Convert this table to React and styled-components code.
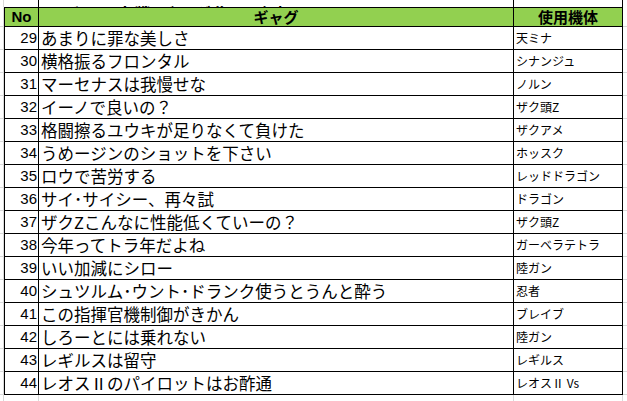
import React from "react";
import styled, { createGlobalStyle } from "styled-components";

const GlobalStyle = createGlobalStyle`
  html, body {
    margin: 0;
    padding: 0;
    background: #ffffff;
  }
  body {
    font-family: "Noto Sans CJK JP", "Liberation Sans", sans-serif;
    color: #000;
    overflow: hidden;
  }
`;

const rows = [
  [29, "あまりに罪な美しさ", "天ミナ"],
  [30, "横格振るフロンタル", "シナンジュ"],
  [31, "マーセナスは我慢せな", "ノルン"],
  [32, "イーノで良いの？", "ザク頭Z"],
  [33, "格闘擦るユウキが足りなくて負けた", "ザクアメ"],
  [34, "うめージンのショットを下さい", "ホッスク"],
  [35, "ロウで苦労する", "レッドドラゴン"],
  [36, "サイ･サイシー、再々試", "ドラゴン"],
  [37, "ザクZこんなに性能低くていーの？", "ザク頭Z"],
  [38, "今年ってトラ年だよね", "ガーベラテトラ"],
  [39, "いい加減にシロー", "陸ガン"],
  [40, "シュツルム･ウント･ドランク使うとうんと酔う", "忍者"],
  [41, "この指揮官機制御がきかん", "ブレイブ"],
  [42, "しろーとには乗れない", "陸ガン"],
  [43, "レギルスは留守", "レギルス"],
  [44, "レオスⅡのパイロットはお酢通", "レオスⅡ Vs"],
];

const Sheet = styled.div`
  width: 627px;
  height: 401px;
  display: flex;
  flex-direction: column;
  overflow: hidden;
`;

const Row = styled.div`
  display: grid;
  grid-template-columns: 4px 35px 475px 109px 1fr;
  height: ${(p) => p.h}px;
  flex: none;
`;

const Stub = styled.div`
  border-bottom: 1px solid ${(p) => (p.plain ? "transparent" : "#d9d9d9")};
  border-right: ${(p) => (p.edge ? "1px solid #d9d9d9" : "none")};
  box-sizing: border-box;
`;

const Cell = styled.div`
  box-sizing: border-box;
  border-right: 1px solid ${(p) => p.line || "#000"};
  border-bottom: 1px solid ${(p) => p.under || "#000"};
  border-left: ${(p) => (p.first ? `1px solid ${p.line || "#000"}` : "none")};
  background: ${(p) => (p.head ? "#92d050" : "transparent")};
  display: flex;
  align-items: center;
  overflow: hidden;
  white-space: nowrap;
`;

const TitleCell = styled(Cell)`
  align-items: flex-end;
`;

const TitleText = styled.span`
  font-weight: 700;
  font-size: 16px;
  line-height: 16px;
  margin-bottom: -14px;
  padding-left: 6px;
  letter-spacing: 2px;
`;

const HeadText = styled.span`
  width: 100%;
  text-align: center;
  font-weight: 700;
  font-size: 15px;
  line-height: 18px;
  font-family: ${(p) => (p.latin ? '"Liberation Sans", sans-serif' : '"Noto Sans CJK JP", sans-serif')};
`;

const NoText = styled.span`
  width: 100%;
  text-align: right;
  padding-right: 1px;
  font-family: "Liberation Sans", sans-serif;
  font-size: 15px;
  line-height: 22px;
`;

const GagText = styled.span`
  padding-left: 2px;
  font-size: 16.5px;
  line-height: 22px;
`;

const UnitText = styled.span`
  padding-left: 2px;
  font-size: 12px;
  line-height: 22px;
`;

export default function App() {
  return (
    <>
      <GlobalStyle />
      <Sheet>
        <Row h={8}>
          <Stub edge plain />
          <Cell />
          <TitleCell>
            <TitleText>ロボット大戦 ギャグ集 一覧表</TitleText>
          </TitleCell>
          <Cell />
          <Stub plain />
        </Row>
        <Row h={19}>
          <Stub edge />
          <Cell head first>
            <HeadText latin>No</HeadText>
          </Cell>
          <Cell head>
            <HeadText>ギャグ</HeadText>
          </Cell>
          <Cell head>
            <HeadText>使用機体</HeadText>
          </Cell>
          <Stub />
        </Row>
        {rows.map(([no, gag, unit]) => (
          <Row h={23} key={no}>
            <Stub edge />
            <Cell first>
              <NoText>{no}</NoText>
            </Cell>
            <Cell>
              <GagText>{gag}</GagText>
            </Cell>
            <Cell>
              <UnitText>{unit}</UnitText>
            </Cell>
            <Stub />
          </Row>
        ))}
        <Row h={23}>
          <Stub edge />
          <Cell line="#d9d9d9" under="#d9d9d9" />
          <Cell line="#d9d9d9" under="#d9d9d9" />
          <Cell line="#d9d9d9" under="#d9d9d9" />
          <Stub />
        </Row>
      </Sheet>
    </>
  );
}
